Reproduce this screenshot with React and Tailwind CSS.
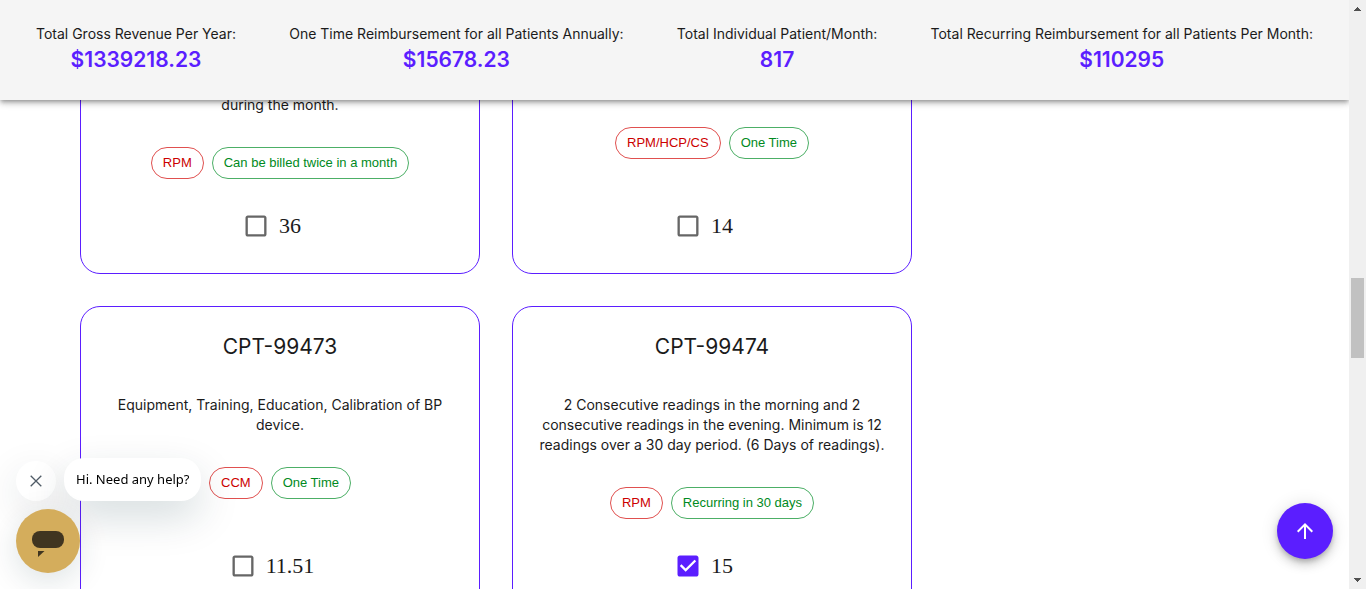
import React from "react";

const PURPLE_CARD =
  "flex flex-col items-center rounded-[20px] border border-[#5b1eff] bg-white px-6 pb-[33px] text-center";

const stats = [
  { label: "Total Gross Revenue Per Year:", value: "$1339218.23" },
  { label: "One Time Reimbursement for all Patients Annually:", value: "$15678.23" },
  { label: "Total Individual Patient/Month:", value: "817" },
  { label: "Total Recurring Reimbursement for all Patients Per Month:", value: "$110295" },
];

const upperCards = [
  { id: "a", text: "during the month.", program: "RPM", billing: "Can be billed twice in a month", amount: "36" },
  { id: "b", program: "RPM/HCP/CS", billing: "One Time", amount: "14" },
];

const lowerCards = [
  {
    id: "99473",
    title: "CPT-99473",
    text: "Equipment, Training, Education, Calibration of BP device.",
    program: "CCM",
    billing: "One Time",
    amount: "11.51",
  },
  {
    id: "99474",
    title: "CPT-99474",
    text: "2 Consecutive readings in the morning and 2 consecutive readings in the evening. Minimum is 12 readings over a 30 day period. (6 Days of readings).",
    program: "RPM",
    billing: "Recurring in 30 days",
    amount: "15",
    checked: true,
  },
];

function Header() {
  return (
    <header className="relative z-10 flex min-h-[100px] shrink-0 justify-between bg-[#f5f5f5] px-9 pt-6 shadow-[0_2px_4px_-1px_rgba(0,0,0,0.3),0_4px_5px_0_rgba(0,0,0,0.14),0_1px_10px_0_rgba(0,0,0,0.12)]">
      {stats.map((s) => (
        <div key={s.label} className="text-center">
          <p className="text-sm leading-5">{s.label}</p>
          <p className="text-[21px] font-semibold leading-8 text-[#5b1eff]">{s.value}</p>
        </div>
      ))}
    </header>
  );
}

function Amount({ id, amount, checked }) {
  return (
    <label htmlFor={`cpt-${id}`} className="mt-auto flex h-7 cursor-pointer items-center gap-[9px] pr-[17px]">
      <span className="grid size-7 place-items-center">
        <input
          id={`cpt-${id}`}
          type="checkbox"
          defaultChecked={checked}
          className="peer col-start-1 row-start-1 size-[21px] appearance-none"
        />
        <svg viewBox="0 0 24 24" className="pointer-events-none col-start-1 row-start-1 size-7 fill-[#666] peer-checked:hidden">
          <path d="M19 5v14H5V5h14m0-2H5c-1.1 0-2 .9-2 2v14c0 1.1.9 2 2 2h14c1.1 0 2-.9 2-2V5c0-1.1-.9-2-2-2z" />
        </svg>
        <svg viewBox="0 0 24 24" className="pointer-events-none col-start-1 row-start-1 hidden size-7 fill-[#5b1eff] peer-checked:block">
          <path d="M19 3H5c-1.11 0-2 .9-2 2v14c0 1.1.89 2 2 2h14c1.11 0 2-.9 2-2V5c0-1.1-.89-2-2-2zm-9 14l-5-5 1.41-1.41L10 14.17l7.59-7.59L19 8l-9 9z" />
        </svg>
      </span>
      <span className="font-['Liberation_Serif',serif] text-[22px] leading-7">{amount}</span>
    </label>
  );
}

function Chips({ program, billing }) {
  return (
    <div className="mt-8 flex gap-2 font-['Liberation_Sans',sans-serif] text-[13px] leading-[30px]">
      <span className="rounded-full border border-[#e0504f] px-[11px] text-[#cc0000]">{program}</span>
      <span className="rounded-full border border-[#4caf66] px-[11px] text-[#008a22]">{billing}</span>
    </div>
  );
}

function ChatWidget() {
  return (
    <section aria-label="Chat" className="fixed bottom-4 left-4 z-20 flex flex-col gap-2">
      <div className="flex items-end gap-2">
        <button
          type="button"
          aria-label="Close message"
          className="grid size-10 place-items-center rounded-full bg-white shadow-[0_12px_40px_rgba(0,50,60,0.12)]"
        >
          <svg viewBox="0 0 12 12" className="size-3 stroke-[#4f5b66]" fill="none" strokeWidth="1.3">
            <path d="M.7.7l10.6 10.6M11.3.7L.7 11.3" />
          </svg>
        </button>
        <p className="rounded-[20px] bg-white px-3 py-[11px] font-['Noto_Sans',sans-serif] text-[13px] leading-[21px] text-black shadow-[0_16px_40px_rgba(0,50,60,0.17)]">
          Hi. Need any help?
        </p>
      </div>
      <button
        type="button"
        aria-label="Open chat"
        className="grid size-16 place-items-center rounded-full bg-[#d4ad5c] shadow-[0_8px_32px_rgba(0,50,60,0.14)]"
      >
        <svg viewBox="0 0 64 64" className="size-16 fill-[#403520]">
          <rect x="16" y="22" width="32" height="17" rx="8" />
          <path d="M22 42h6.500L22 48z" />
        </svg>
      </button>
    </section>
  );
}

function ScrollTrack() {
  return (
    <div aria-hidden="true" className="flex w-[17px] shrink-0 flex-col items-center justify-between bg-[#f0f0f0] py-[7px]">
      <svg viewBox="0 0 7 4" className="h-1 w-[7px] fill-[#505050]" shapeRendering="crispEdges">
        <path d="M3 0h1v1h1v1h1v1h1v1H0V3h1V2h1V1h1z" />
      </svg>
      <div className="mt-[46px] h-20 w-[13px] bg-[#c1c1c1]" />
      <svg viewBox="0 0 7 4" className="h-1 w-[7px] fill-[#505050]" shapeRendering="crispEdges">
        <path d="M0 0h7v1H6v1H5v1H4v1H3V3H2V2H1V1H0z" />
      </svg>
    </div>
  );
}

export default function App() {
  return (
    <div className="flex h-screen overflow-hidden bg-white font-[Inter,sans-serif] text-[#1b1b1b]">
      <div className="relative flex min-w-0 flex-1 flex-col overflow-hidden">
        <Header />
        <main className="-mt-6 flex flex-col gap-8 px-20">
          <div className="grid grid-cols-[repeat(2,400px)] gap-8">
            {upperCards.map((c) => (
              <article key={c.id} className={`${PURPLE_CARD} min-h-[198px] pt-[18px]`}>
                {c.text && <p className="text-sm leading-5">{c.text}</p>}
                <Chips {...c} />
                <Amount {...c} />
              </article>
            ))}
          </div>
          <div className="grid grid-cols-[repeat(2,400px)] gap-8">
            {lowerCards.map((c) => (
              <article key={c.id} className={`${PURPLE_CARD} min-h-[308px] pt-6`}>
                <h2 className="text-[21px] leading-8">{c.title}</h2>
                <p className="mt-8 text-sm leading-5">{c.text}</p>
                <Chips {...c} />
                <Amount {...c} />
              </article>
            ))}
          </div>
        </main>
        <button
          type="button"
          aria-label="Back to top"
          className="absolute bottom-[30px] right-4 z-20 grid size-14 place-items-center rounded-full bg-[#5b1eff] shadow-[0_3px_5px_-1px_rgba(0,0,0,0.2),0_6px_10px_0_rgba(0,0,0,0.14),0_1px_18px_0_rgba(0,0,0,0.12)]"
        >
          <svg viewBox="0 0 24 24" className="size-6 fill-white">
            <path d="M4 12l1.41 1.41L11 7.83V20h2V7.830l5.580 5.590L20 12l-8-8-8 8z" />
          </svg>
        </button>
      </div>
      <ScrollTrack />
      <ChatWidget />
    </div>
  );
}
